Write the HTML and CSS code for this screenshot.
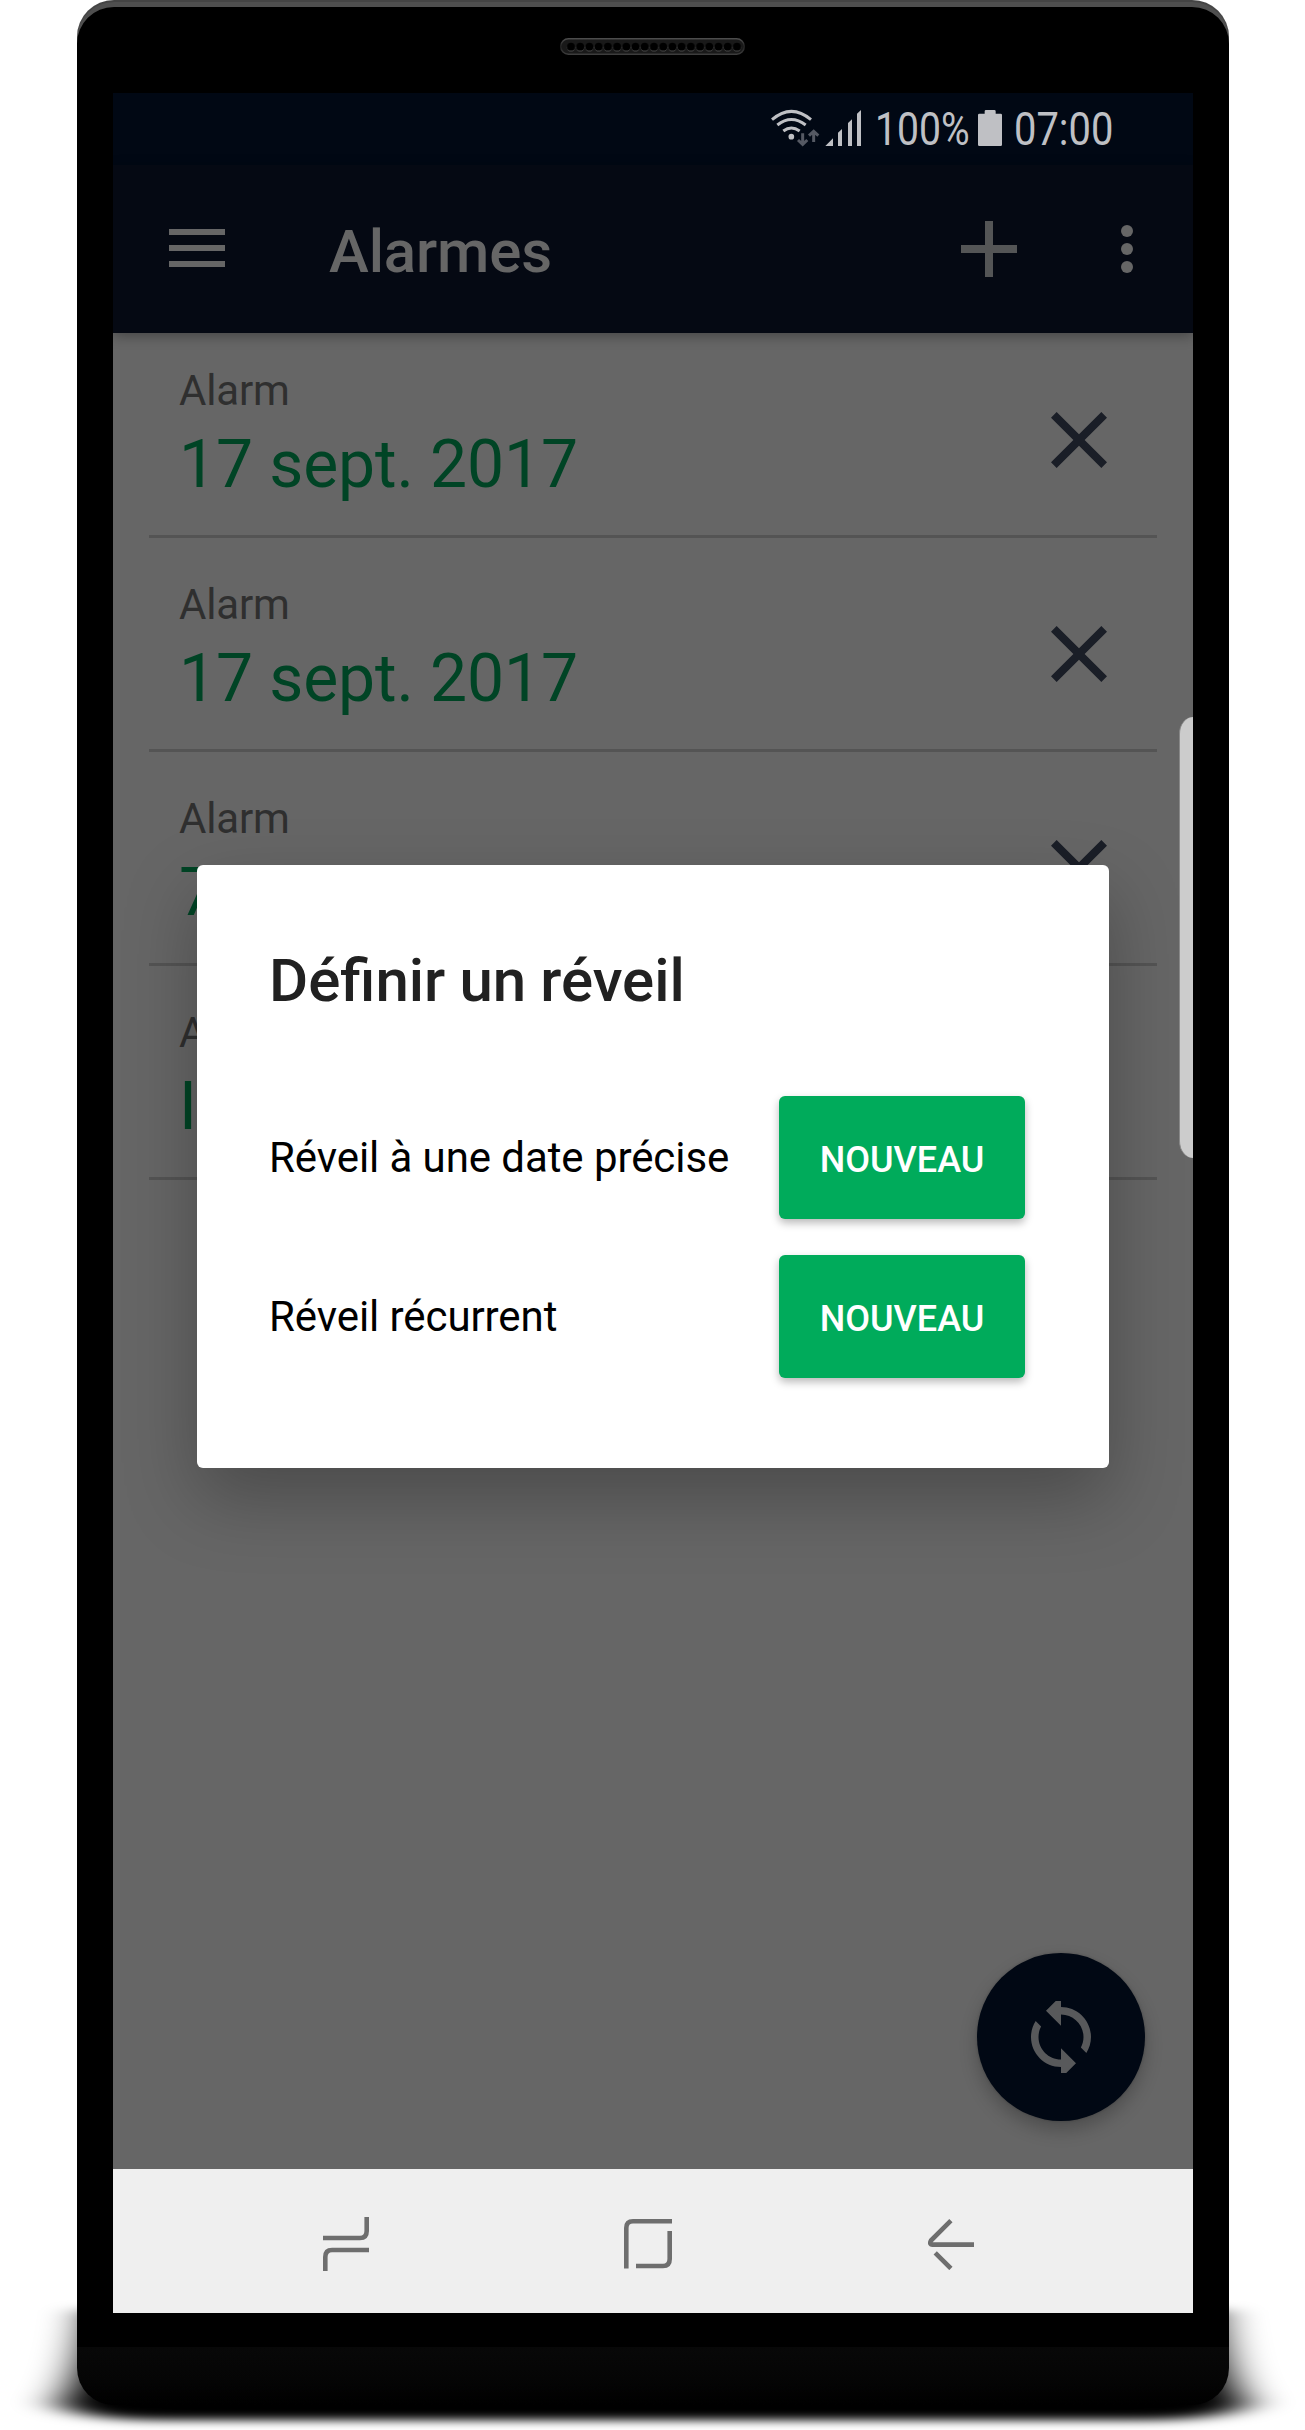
FILE: index.html
```
<!DOCTYPE html>
<html lang="fr">
<head>
<meta charset="utf-8">
<title>Alarmes</title>
<link rel="stylesheet" href="styles.css">
</head>
<body>
<svg class="floor-shadow" viewBox="0 0 1305 160" aria-hidden="true">
  <defs><filter id="soft" x="-10%" y="-40%" width="120%" height="180%"><feGaussianBlur stdDeviation="22 5"/></filter></defs>
  <path filter="url(#soft)" d="M90 40 C84 80 80 105 60 132 C60 142 100 150 160 150 H1146 C1206 150 1246 142 1246 132 C1226 105 1222 80 1216 40Z"/>
</svg>
<div class="phone">
  <div class="forehead">
    <svg class="speaker" viewBox="0 0 185 17">
      <defs>
        <linearGradient id="rim" x1="0" y1="0" x2="0" y2="1"><stop offset="0" stop-color="#4c4c4c"/><stop offset=".5" stop-color="#222"/><stop offset="1" stop-color="#3d3d3d"/></linearGradient>
        <pattern id="holes" x="6.4" y="0" width="9.22" height="17" patternUnits="userSpaceOnUse"><circle cx="4.6" cy="9.6" r="4" fill="#484848"/><circle cx="4.6" cy="8.7" r="3.9" fill="#000"/></pattern>
      </defs>
      <rect x=".75" y=".75" width="183.5" height="15.5" rx="7.75" fill="#191919" stroke="url(#rim)" stroke-width="1.5"/>
      <rect x="6.4" y="0" width="175.2" height="17" fill="url(#holes)"/>
    </svg>
  </div>
  <main class="screen">
    <div class="status">
      <svg class="status-icons" viewBox="90 39 1080 216">
        <g fill="none" stroke="#bfc0c4" stroke-width="9">
          <path d="M96 119Q154 69 213 119M112 135Q154 102 197 135M130 153Q154 135 179 153"/>
        </g>
        <circle cx="154" cy="170" r="8.5" fill="#bfc0c4"/>
        <g fill="none" stroke="#555963" stroke-width="9"><path d="M188 160V192M174 180L188 193L202 180M221 186V154M207 167L221 154L235 167"/></g>
        <path fill="#bfc0c4" d="M256 198L279 175V198ZM294 198V158L306 147V198ZM324 198V129L336 118V198ZM351 198V101L363 90V198Z"/>
        <text x="405" y="196" textLength="284" lengthAdjust="spacingAndGlyphs">100%</text>
        <path fill="#bfc0c4" d="M718 101H734V94Q734 90 738 90H763Q767 90 767 94V101H782Q786 101 786 105V194Q786 198 782 198H718Q714 198 714 194V105Q714 101 718 101Z"/>
        <text x="822" y="196" textLength="298" lengthAdjust="spacingAndGlyphs">07:00</text>
      </svg>
    </div>
    <header class="toolbar">
      <svg class="menu" viewBox="0 0 56 38"><path d="M0 0h56v6H0zM0 16h56v6H0zM0 32h56v6H0z"/></svg>
      <h1>Alarmes</h1>
      <svg class="add" viewBox="5 5 14 14"><path d="M19 13h-6v6h-2v-6H5v-2h6V5h2v6h6z"/></svg>
      <svg class="more" viewBox="0 0 12 48"><circle cx="6" cy="6" r="6"/><circle cx="6" cy="24" r="6"/><circle cx="6" cy="42" r="6"/></svg>
    </header>
    <section class="list">
      <div class="row"><div><p class="label">Alarm</p><p class="date">17 sept. 2017</p></div><svg class="close" viewBox="5 5 14 14"><path d="M19 6.41L17.59 5 12 10.59 6.41 5 5 6.41 10.59 12 5 17.59 6.41 19 12 13.41 17.59 19 19 17.59 13.41 12z"/></svg></div>
      <div class="row"><div><p class="label">Alarm</p><p class="date">17 sept. 2017</p></div><svg class="close" viewBox="5 5 14 14"><path d="M19 6.41L17.59 5 12 10.59 6.41 5 5 6.41 10.59 12 5 17.59 6.41 19 12 13.41 17.59 19 19 17.59 13.41 12z"/></svg></div>
      <div class="row"><div><p class="label">Alarm</p><p class="date">7</p></div><svg class="close" viewBox="5 5 14 14"><path d="M19 6.41L17.59 5 12 10.59 6.41 5 5 6.41 10.59 12 5 17.59 6.41 19 12 13.41 17.59 19 19 17.59 13.41 12z"/></svg></div>
      <div class="row"><div><p class="label">Alarm</p><p class="date">I</p></div></div>
    </section>
    <div class="fab"><svg viewBox="2.4 2.4 19.2 19.2"><path d="M12 4V1L8 5l4 4V6c3.31 0 6 2.69 6 6 0 1.01-.25 1.97-.7 2.8l1.46 1.46C19.54 15.03 20 13.57 20 12c0-4.42-3.58-8-8-8zm0 14c-3.31 0-6-2.69-6-6 0-1.01.25-1.97.7-2.8L5.24 7.74C4.46 8.97 4 10.43 4 12c0 4.42 3.58 8 8 8v3l4-4-4-4v3z"/></svg></div>
    <div class="dialog" role="dialog">
      <h2>Définir un réveil</h2>
      <div class="option"><span>Réveil à une date précise</span><button>NOUVEAU</button></div>
      <div class="option"><span>Réveil récurrent</span><button>NOUVEAU</button></div>
    </div>
    <div class="edge-handle"></div>
    <nav class="navbar">
      <svg class="recents" viewBox="0 0 46 54"><path d="M0 21H37Q43.7 21 43.7 14V0M46 33H9Q2.3 33 2.3 40V54"/></svg>
      <svg class="home" viewBox="0 0 48 50"><path d="M2.3 49.5V9Q2.3 2.3 9 2.3H48M45.7 12V40Q45.7 47 39 47H12"/></svg>
      <svg class="back" viewBox="0 0 46 52"><path d="M22.9 2.6L3 22.5Q.8 26.6 4.5 26.6H46M7.2 34.8L22.9 50.5"/></svg>
    </nav>
  </main>
</div>
</body>
</html>
```
FILE: styles.css
```
* { box-sizing: border-box; margin: 0; padding: 0; }
body { position: relative; width: 1305px; height: 2430px; overflow: hidden; background: #fff; font-family: Roboto, "Liberation Sans", sans-serif; }
svg { display: block; flex: none; }
.floor-shadow { position: absolute; left: 0; top: 2270px; width: 1305px; height: 160px; }
.phone {
  position: relative; width: 1152px; height: 2405px; margin: 0 0 0 77px; padding: 0 36px;
  border-radius: 37px;
  background: linear-gradient(#080808, #050505 55%, #000) 0 2347px / 100% 58px no-repeat, #000;
  box-shadow: inset 0 2px 0 #444, inset 0 7px 0 #4f4f4f;
}
.forehead { height: 93px; padding: 38px 0 0 447px; }
.speaker { width: 185px; height: 17px; }
.screen { position: relative; display: flex; flex-direction: column; width: 1080px; height: 2220px; overflow: hidden; background: #666; }
.status { display: flex; justify-content: flex-end; flex: none; height: 72px; padding-right: 63px; background: #010814; }
.status-icons { width: 360px; height: 72px; }
.status-icons text { font-size: 138px; fill: #bfc0c4; }
.toolbar { position: relative; z-index: 1; display: flex; align-items: center; flex: none; height: 168px; padding: 0 60px 0 56px; background: #050913; box-shadow: 0 3px 12px rgba(0, 0, 0, .32); }
.menu { width: 56px; height: 38px; margin-top: -2px; fill: #666; }
.toolbar h1 { flex: 1; margin-left: 104px; padding-top: 5px; font-size: 60px; font-weight: 500; line-height: 70px; letter-spacing: -.15px; color: #666; }
.add { width: 56px; height: 56px; margin-right: 104px; fill: #545556; }
.more { width: 12px; height: 48px; fill: #666; }
.list { flex: 1; margin-top: -9px; padding: 0 36px; }
.row { display: flex; justify-content: space-between; height: 214px; padding: 41px 50px 0 30px; border-bottom: 3px solid #545454; }
.label { padding-top: 1px; font-size: 42px; line-height: 50px; letter-spacing: -.15px; color: #2f2f2f; }
.date { margin-top: 10px; font-size: 66px; line-height: 78px; letter-spacing: -.12px; color: #004425; white-space: nowrap; }
.close { width: 56px; height: 56px; margin-top: 47px; fill: #1a1e27; }
.fab { position: absolute; right: 48px; bottom: 192px; display: grid; place-items: center; width: 168px; height: 168px; border-radius: 50%; background: #010814; box-shadow: 0 9px 18px rgba(0, 0, 0, .24), 0 0 3px rgba(0, 0, 0, .2); }
.fab svg { width: 72px; height: 72px; fill: #58595b; overflow: hidden; }
.dialog { position: absolute; left: 84px; top: 772px; width: 912px; height: 603px; padding: 81px 84px 0 72px; border-radius: 6px; background: #fff; box-shadow: 0 30px 72px rgba(0, 0, 0, .27); }
.dialog h2 { margin-bottom: 80px; font-size: 60px; font-weight: 500; line-height: 70px; word-spacing: -.8px; color: #212121; }
.option { display: flex; align-items: center; justify-content: space-between; height: 123px; margin-bottom: 36px; font-size: 42px; letter-spacing: -.08px; color: #000; white-space: nowrap; }
.option button { width: 246px; height: 123px; padding-top: 5px; border: 0; border-radius: 6px; background: #00ab5b; color: #fff; font: 500 36px Roboto, "Liberation Sans", sans-serif; box-shadow: 0 4px 8px rgba(0, 0, 0, .28); }
.edge-handle { position: absolute; right: 0; top: 624px; width: 14px; height: 441px; border-left: 1px solid #888; border-radius: 18px 0 0 18px / 22px 0 0 22px; background: #ccc; }
.navbar { display: flex; flex: none; align-items: flex-start; height: 144px; padding: 48px 0 0 210px; background: #efefef; }
.navbar svg { fill: none; stroke: #6e6e6e; stroke-width: 4.6; }
.recents { width: 46px; height: 54px; }
.home { width: 48px; height: 50px; margin: 2px 0 0 255px; }
.back { width: 46px; height: 52px; margin: 1px 0 0 256px; }
```
